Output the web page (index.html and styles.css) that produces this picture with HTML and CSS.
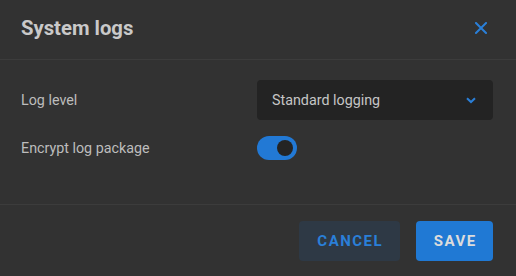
FILE: index.html
```html
<!DOCTYPE html>
<html>
<head>
<meta charset="utf-8">
<link rel="stylesheet" href="styles.css">
</head>
<body>
<div class="dialog">
  <div class="header">
    <h1 class="title">System logs</h1>
    <button class="close" aria-label="Close">
      <svg width="12" height="12" viewBox="0 0 12 12"><path d="M1 1L11 11M11 1L1 11" stroke="#2a7fd8" stroke-width="2" stroke-linecap="square" fill="none"/></svg>
    </button>
  </div>
  <div class="content">
    <div class="row">
      <div class="label">Log level</div>
      <div class="select">
        <span>Standard logging</span>
        <svg width="10" height="7" viewBox="0 0 10 7"><path d="M1 1.2L5 5L9 1.2" stroke="#2a7fd8" stroke-width="2" fill="none"/></svg>
      </div>
    </div>
    <div class="row">
      <div class="label">Encrypt log package</div>
      <div class="toggle"><div class="knob"></div></div>
    </div>
  </div>
  <div class="footer">
    <button class="btn cancel">CANCEL</button>
    <button class="btn save">SAVE</button>
  </div>
</div>
</body>
</html>
```
FILE: styles.css
```css
html, body {
  margin: 0;
  padding: 0;
  background: #323232;
  font-family: Roboto, "Liberation Sans", sans-serif;
}
.dialog {
  width: 516px;
  height: 276px;
  display: flex;
  flex-direction: column;
}
.header {
  height: 60px;
  box-sizing: border-box;
  border-bottom: 1px solid #3c3c3c;
  display: flex;
  align-items: center;
  justify-content: space-between;
  padding: 0 29px 3px 21px;
}
.title {
  margin: 0;
  font-size: 20.3px;
  font-weight: 700;
  color: #c9c9c9;
}
.close {
  background: none;
  border: 0;
  padding: 0;
  width: 12px;
  height: 12px;
  display: flex;
}
.content {
  padding: 20px 23px 0 21px;
  height: 145px;
  box-sizing: border-box;
  border-bottom: 1px solid #3c3c3c;
  display: flex;
  flex-direction: column;
  gap: 16px;
}
.row {
  display: grid;
  grid-template-columns: 236px 1fr;
  align-items: center;
}
.label {
  font-size: 14.3px;
  color: #bdbdbd;
}
.select {
  height: 40px;
  background: #232323;
  border-radius: 4px;
  display: flex;
  align-items: center;
  justify-content: space-between;
  padding: 0 17px 0 15px;
  font-size: 14.3px;
  color: #c6c6c6;
}
.toggle {
  width: 40px;
  height: 24px;
  border-radius: 12px;
  background: #2279d5;
  display: flex;
  align-items: center;
  justify-content: flex-end;
  padding-right: 4px;
  box-sizing: border-box;
}
.knob {
  width: 16px;
  height: 16px;
  border-radius: 50%;
  background: #242424;
}
.footer {
  flex: 1;
  display: flex;
  justify-content: flex-end;
  align-items: flex-start;
  padding: 16px 23px 0 0;
  gap: 16px;
}
.btn {
  height: 40px;
  border: 0;
  border-radius: 4px;
  font-family: Roboto, "Liberation Sans", sans-serif;
  font-size: 15px;
  font-weight: 700;
  letter-spacing: 1.5px;
  padding: 0 0 0 1.5px;
}
.cancel {
  width: 101px;
  background: #2e3945;
  color: #2a7fd8;
}
.save {
  width: 77px;
  background: #2079d4;
  color: #dcdcdc;
}
```
